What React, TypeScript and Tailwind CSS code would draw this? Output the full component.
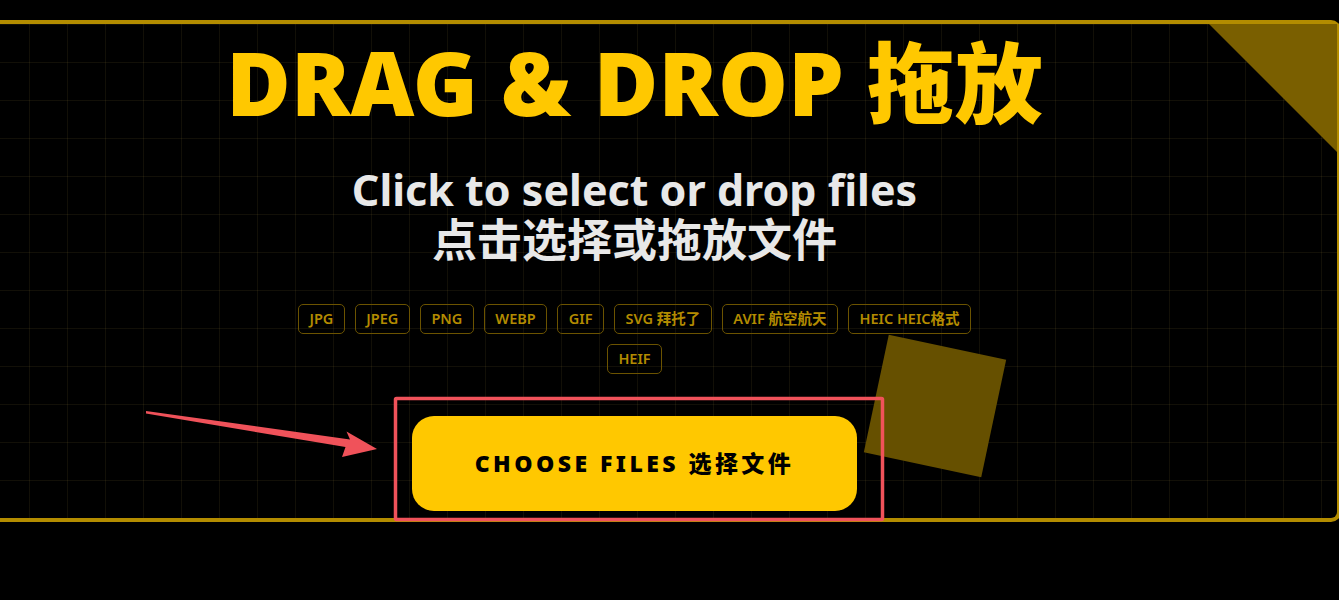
import React from "react";

const tags = ["JPG", "JPEG", "PNG", "WEBP", "GIF", "SVG 拜托了", "AVIF 航空航天", "HEIC HEIC格式", "HEIF"];

export default function App() {
  return (
    <div className="relative w-full h-[600px] overflow-hidden bg-black font-['Noto_Sans','Noto_Sans_CJK_SC',sans-serif]">
      <div className="pt-[20px]">
        <div className="relative ml-[-68px] w-[1409px] h-[502px] border-y-4 border-r-4 border-[#b38c00] rounded-r-[10px] bg-black bg-[linear-gradient(to_right,rgba(255,220,100,0.07)_1px,transparent_1px),linear-gradient(to_bottom,rgba(255,220,100,0.07)_1px,transparent_1px)] bg-[size:38px_38px] bg-[position:21px_0px]">
          <div className="absolute right-0 top-0 w-[128px] h-[128px] bg-[#7a5f00] [clip-path:polygon(0_0,100%_0,100%_100%)]" />
          <div className="relative flex flex-col items-center pt-[14px]">
            <h1 className="text-[88px] leading-[88px] font-black text-[#ffc800] whitespace-nowrap">
              DRAG &amp; DROP 拖放
            </h1>
            <div className="mt-[39px] flex flex-col items-center font-bold text-[#e8e8e8]">
              <div className="text-[43px] leading-[50px]">Click to select or drop files</div>
              <div className="text-[45px] leading-[50px]">点击选择或拖放文件</div>
            </div>
            <div className="mt-[39px] flex flex-wrap justify-center gap-x-[10px] gap-y-[10px] max-w-[690px]">
              {tags.map((t) => (
                <div
                  key={t}
                  className="h-[30px] px-[10.5px] flex items-center border border-[#6b5300] rounded-[5px] text-[14.5px] font-semibold text-[#b38b00]"
                >
                  {t}
                </div>
              ))}
            </div>
            <button className="mt-[42px] w-[445px] h-[95px] rounded-[22px] bg-[#ffc800] text-black text-[23px] font-black tracking-[0.15em]">
              CHOOSE FILES 选择文件
            </button>
          </div>
        </div>
      </div>
      <div className="absolute left-[875px] top-[346px] w-[120px] h-[120px] rotate-[12deg] bg-[#665000]" />
      <svg className="absolute left-0 top-0 pointer-events-none" width="1339" height="600" viewBox="0 0 1339 600">
        <rect x="395.5" y="398.5" width="487" height="121" fill="none" stroke="#f0525a" strokeWidth="3.5" rx="1" />
        <polygon
          points="146,411 350,439.5 346.5,431.5 377,449 342,457 345.5,447 146,413.5"
          fill="#f0525a"
        />
      </svg>
    </div>
  );
}
